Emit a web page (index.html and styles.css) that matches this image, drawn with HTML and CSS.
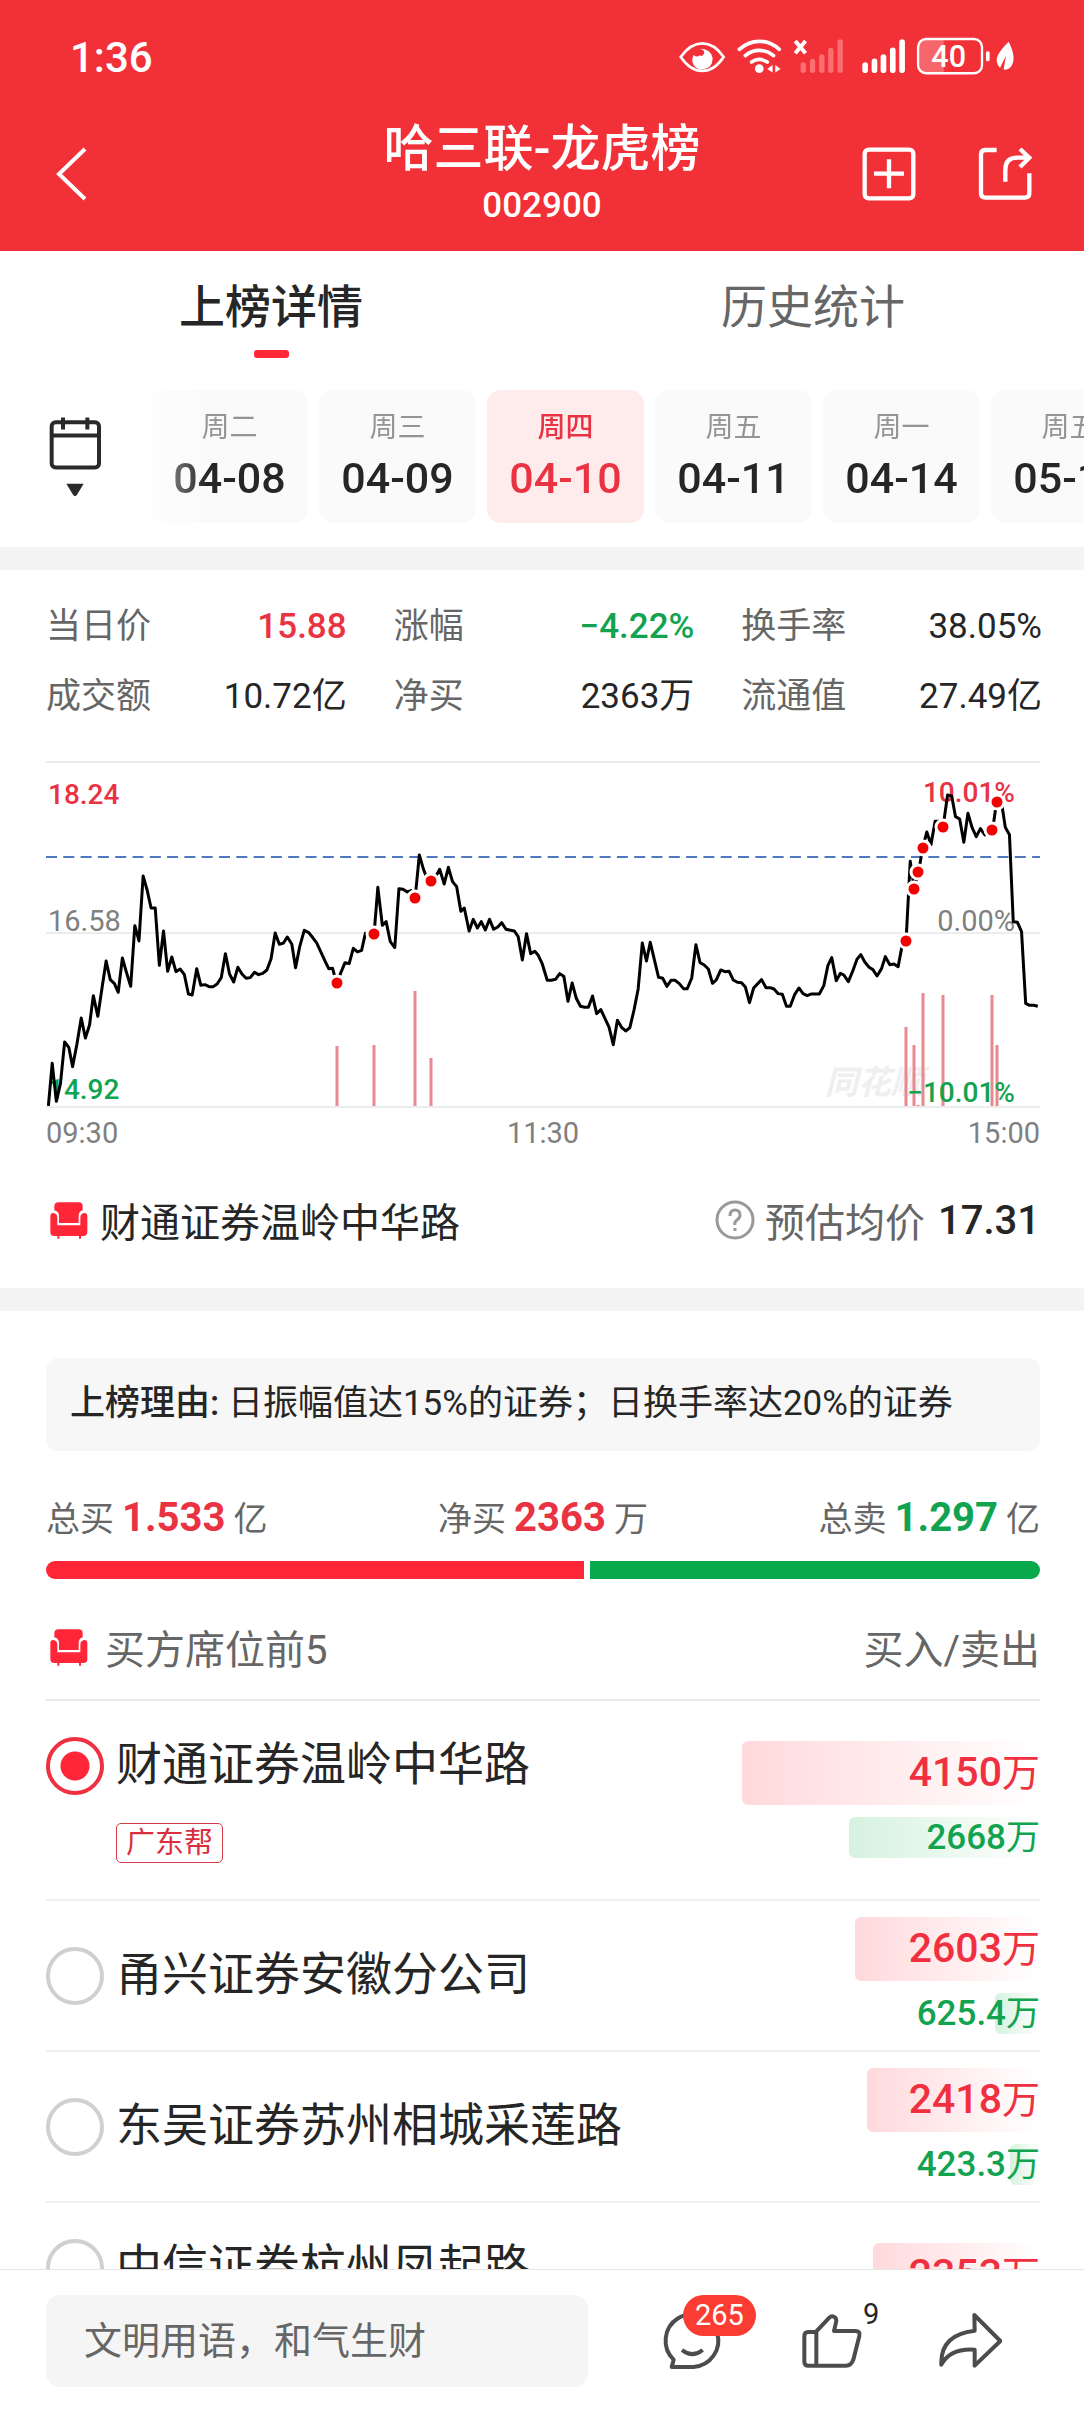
FILE: index.html
```html
<!DOCTYPE html>
<html lang="zh-CN">
<head>
<meta charset="utf-8">
<meta name="viewport" content="width=device-width, initial-scale=1">
<title>哈三联-龙虎榜</title>
<link rel="stylesheet" href="styles.css">
</head>
<body>
<svg class="sprite" aria-hidden="true">
  <symbol id="sofa" viewBox="62 66 114 114">
    <path d="M88 70h60q12 0 12 12v12q-12 4-12 16v22H89v-22q0-12-14-16V82q0-12 13-12z"/>
    <path d="M69 102q15 0 15 14v23h69v-23q0-14 15-14 6 1 6 9v48q0 12-12 12h-7v8h-6v-8H90v8h-6v-8h-9q-12 0-12-12v-48q0-8 6-9z"/>
  </symbol>
</svg>
<div class="app">
  <header class="top">
    <div class="status">
      <span class="clock">1:36</span>
      <svg class="status-icons" viewBox="50 40 1030 130" role="img" aria-label="状态栏">
        <g fill="none" stroke="#fff" stroke-linecap="round">
          <path stroke-width="8" d="M61 109Q90 68 126 68T190 109Q162 151 126 151T61 109z"/>
          <path stroke-width="11" d="M237 86Q264 62 297 62T357 86M255 105Q273 89 297 89T340 105M274 124Q296 109 321 124"/>
        </g>
        <g fill="#fff">
          <path d="M118 84q19 5 12 17-5 8-12 3-7 8-18-1-8 16-1 28 9 16 27 16 31-3 31-34-4-29-39-29z"/>
          <circle cx="297" cy="144" r="13"/>
          <path d="M337 133v23l-16-11zM345 133v23l16-11z"/>
          <path d="M1046 63q24 46 9 72-8 13-24 12l7-42-18 37q-13-15-9-32 8-21 35-47z"/>
          <rect x="978" y="92" width="11" height="30" rx="5"/>
        </g>
        <path d="M405 61l31 37M436 61l-31 37" stroke="#fff" stroke-width="12"/>
        <g stroke="#fb6f73" stroke-width="16" stroke-linecap="round">
          <path d="M429 133v16M457 122v27M485 109v40M512 89v60M540 64v85"/>
        </g>
        <g stroke="#fff" stroke-width="17" stroke-linecap="round">
          <path d="M615 133v16M643 122v27M670 109v40M698 89v60M726 64v85"/>
        </g>
        <path d="M795 56h56v101h-56q-20 0-20-20V76q0-20 20-20z" fill="#f7666b"/>
        <rect x="774" y="55" width="192" height="103" rx="24" fill="none" stroke="#fff" stroke-width="7"/>
        <text class="battery" x="866" y="140" text-anchor="middle">40</text>
      </svg>
    </div>
    <nav class="nav">
      <button class="icon-btn" aria-label="返回">
        <svg width="54" height="54" viewBox="0 0 54 54"><path d="M33 2L7 27 33 52" fill="none" stroke="#fff" stroke-width="4"/></svg>
      </button>
      <div class="heading">
        <h1>哈三联-龙虎榜</h1>
        <p>002900</p>
      </div>
      <div class="nav-actions">
        <button class="icon-btn" aria-label="添加自选">
          <svg width="54" height="54" viewBox="606 380 162 162" fill="none" stroke="#fff" stroke-width="13"><rect x="614" y="388" width="146" height="146" rx="12"/><path d="M687 417v87M642 460h90"/></svg>
        </button>
        <button class="icon-btn" aria-label="分享页面">
          <svg width="54" height="54" viewBox="953 380 162 162" fill="none" stroke="#fff" stroke-width="13"><path d="M1009 389h-34q-13 0-13 13v117q0 13 13 13h119q13 0 13-13v-60M1035 484v-36q0-36 36-36h35M1079 386l28 26-28 28"/></svg>
        </button>
      </div>
    </nav>
  </header>

  <main class="content">
    <div class="tabs" role="tablist">
      <button class="tab is-active" role="tab" aria-selected="true">上榜详情</button>
      <button class="tab" role="tab" aria-selected="false">历史统计</button>
    </div>
    <div class="dates">
      <button class="icon-btn calendar" aria-label="选择日期">
        <svg width="55" height="82" viewBox="85 75 165 245"><g fill="none" stroke="#2a2a2a" stroke-width="12"><rect x="96" y="93" width="142" height="136" rx="12"/><path d="M96 133h142M130 79v36M203 79v36"/></g><path d="M140 278h52l-20 33q-6 8-12 0z" fill="#2a2a2a"/></svg>
      </button>
      <div class="date-strip">
        <span class="date-edge" aria-hidden="true"></span>
        <button class="date"><small>周二</small>04-08</button>
        <button class="date"><small>周三</small>04-09</button>
        <button class="date is-active"><small>周四</small>04-10</button>
        <button class="date"><small>周五</small>04-11</button>
        <button class="date"><small>周一</small>04-14</button>
        <button class="date"><small>周五</small>05-16</button>
      </div>
    </div>

    <section class="quote">
      <dl class="stats">
        <div><dt>当日价</dt><dd class="up">15.88</dd></div>
        <div><dt>涨幅</dt><dd class="down">−4.22%</dd></div>
        <div><dt>换手率</dt><dd>38.05%</dd></div>
        <div><dt>成交额</dt><dd>10.72亿</dd></div>
        <div><dt>净买</dt><dd>2363万</dd></div>
        <div><dt>流通值</dt><dd>27.49亿</dd></div>
      </dl>
      <svg class="chart" viewBox="1 0 994 348" role="img" aria-label="分时走势">
        <text class="watermark" x="780" y="333">同花顺</text>
        <path d="M0 1h995M0 172h995M0 346h995" stroke="#ececec" stroke-width="2"/>
        <path d="M1 96h994" stroke="#5079bd" stroke-width="2" stroke-dasharray="11 6.3"/>
        <text class="up" x="3" y="43">18.24</text>
        <text class="flat" x="3" y="170">16.58</text>
        <text class="down" x="3" y="338">14.92</text>
        <g stroke="#e8898f" stroke-width="3">
          <path d="M292 285v60M329 284v61M370 230v115M386 297v48M861 266v79M869 284v61M873 344v1M878 232v113M898 234v111M947 234v111M952 284v61"/>
        </g>
        <g text-anchor="end">
          <text class="up" x="970" y="41">10.01%</text>
          <text class="flat" x="970" y="170">0.00%</text>
          <text class="down" x="970" y="341">−10.01%</text>
        </g>
        <g transform="translate(-45 -11) scale(.3457 .3333)">
          <polyline class="price" points="140,1068 151,940 163,1054 175,1000 187,876 199,892 210,950 222,885 235,804 247,864 259,825 270,737 283,799 295,715 307,633 319,689 331,701 342,727 354,624 366,668 378,709 390,527 402,573 414,378 426,422 437,474 449,474 461,646 473,543 485,664 497,621 509,665 521,657 533,673 545,732 556,735 569,656 581,706 593,704 605,710 617,710 628,702 640,683 652,611 664,672 676,696 688,652 700,672 712,685 724,683 736,667 748,674 760,670 772,660 784,627 796,549 808,583 820,579 831,561 844,582 855,653 867,590 880,541 892,547 904,562 916,579 928,606 940,633 951,656 962,655 974,700 986,668 998,638 1010,641 1022,595 1034,606 1046,601 1057,550 1070,549 1082,553 1093,412 1106,526 1117,515 1129,575 1142,593 1154,416 1166,418 1178,426 1189,422 1201,443 1213,315 1225,358 1236,388 1248,394 1260,380 1272,358 1285,402 1297,352 1309,395 1321,410 1333,484 1343,474 1357,543 1369,508 1381,534 1392,515 1404,540 1416,508 1428,538 1440,531 1451,518 1464,538 1488,543 1499,560 1511,630 1523,551 1535,611 1547,604 1557,616 1568,640 1583,691 1595,691 1607,688 1619,671 1631,679 1643,754 1655,699 1667,745 1679,769 1691,772 1702,772 1714,738 1726,791 1738,779 1762,832 1774,884 1786,811 1798,832 1810,843 1822,833 1834,780 1846,717 1858,579 1870,633 1881,577 1905,682 1917,685 1929,709 1941,691 1953,691 1965,701 1977,716 1988,716 2001,684 2013,584 2025,638 2037,645 2049,657 2061,700 2072,690 2085,660 2097,665 2109,664 2121,690 2133,697 2145,698 2156,711 2168,758 2180,714 2203,689 2216,713 2228,713 2239,717 2251,731 2263,733 2275,769 2286,769 2299,733 2311,714 2323,731 2335,737 2347,732 2370,732 2383,707 2395,646 2406,623 2419,692 2431,670 2441,675 2454,695 2466,665 2479,628 2490,614 2502,637 2514,652 2525,659 2537,678 2550,656 2561,620 2574,644 2586,642 2598,650 2609,590 2621,572 2633,334 2645,417 2657,366 2669,294 2681,246 2693,284 2705,214 2717,214 2728,231 2741,135 2753,138 2764,200 2776,207 2788,277 2800,190 2812,233 2824,260 2836,236 2849,255 2871,241 2883,155 2896,150 2908,232 2920,254 2931,515 2943,517 2955,545 2967,760 2978,766 2990,766 3002,769"/>
        </g>
        <g fill="#f30000" stroke="#fff" stroke-width="3">
          <circle cx="292" cy="222" r="7"/><circle cx="329" cy="173" r="7"/><circle cx="370" cy="137" r="7"/><circle cx="386" cy="120" r="7"/>
          <circle cx="861" cy="180" r="7"/><circle cx="869" cy="128" r="7"/><circle cx="873" cy="111" r="7"/><circle cx="878" cy="87" r="7"/>
          <circle cx="898" cy="66" r="7"/><circle cx="947" cy="69" r="7"/><circle cx="952" cy="41" r="7"/>
        </g>
      </svg>
      <div class="times"><span>09:30</span><span>11:30</span><span>15:00</span></div>
      <div class="seat-line">
        <svg class="sofa"><use href="#sofa"/></svg>
        <span class="seat-line-name">财通证券温岭中华路</span>
        <svg class="help" viewBox="0 0 40 40" role="img" aria-label="说明"><circle cx="20" cy="20" r="18" fill="none" stroke="#999" stroke-width="3"/><path d="M15 16q0-6 5-6t5 5q0 3-3 5t-2 5M20 28v3" fill="none" stroke="#999" stroke-width="3"/></svg>
        <span class="muted">预估均价</span>
        <strong>17.31</strong>
      </div>
    </section>

    <section class="detail">
      <p class="reason"><b>上榜理由:</b> 日振幅值达15%的证券；日换手率达20%的证券</p>
      <div class="totals">
        <span>总买<b class="up">1.533</b>亿</span>
        <span>净买<b class="up">2363</b>万</span>
        <span>总卖<b class="down">1.297</b>亿</span>
      </div>
      <div class="ratio"><i class="ratio-buy" style="flex-grow:1533"></i><i class="ratio-sell" style="flex-grow:1283"></i></div>
      <div class="list-head">
        <svg class="sofa"><use href="#sofa"/></svg>
        <h2>买方席位前5</h2>
        <span>买入/卖出</span>
      </div>
      <ul class="seats">
        <li class="seat is-tall">
          <div class="seat-main">
            <label><input type="radio" name="seat" checked>财通证券温岭中华路</label>
            <span class="tag">广东帮</span>
          </div>
          <div class="amounts">
            <span class="buy"><i style="width:100%"></i>4150<small>万</small></span>
            <span class="sell"><i style="width:64%"></i>2668<small>万</small></span>
          </div>
        </li>
        <li class="seat">
          <div class="seat-main"><label><input type="radio" name="seat">甬兴证券安徽分公司</label></div>
          <div class="amounts">
            <span class="buy"><i style="width:62%"></i>2603<small>万</small></span>
            <span class="sell"><i style="width:15%"></i>625.4<small>万</small></span>
          </div>
        </li>
        <li class="seat">
          <div class="seat-main"><label><input type="radio" name="seat">东吴证券苏州相城采莲路</label></div>
          <div class="amounts">
            <span class="buy"><i style="width:58%"></i>2418<small>万</small></span>
            <span class="sell"><i style="width:10%"></i>423.3<small>万</small></span>
          </div>
        </li>
        <li class="seat is-tall">
          <div class="seat-main"><label><input type="radio" name="seat">中信证券杭州凤起路</label></div>
          <div class="amounts">
            <span class="buy"><i style="width:56%"></i>2353<small>万</small></span>
          </div>
        </li>
      </ul>
    </section>
  </main>

  <footer class="bottom">
    <input class="comment" type="text" aria-label="评论" placeholder="文明用语，和气生财">
    <div class="actions">
      <button class="icon-btn" aria-label="评论列表">
        <svg width="64" height="64" viewBox="60 85 192 192"><path d="M95 262L101 240A79 79 0 1 1 160 262zM126 211Q157 236 188 211"/></svg>
        <span class="badge">265</span>
      </button>
      <button class="icon-btn" aria-label="点赞">
        <svg width="64" height="64" viewBox="475 85 192 192"><path d="M527 155L566 114Q574 106 583 113 589 119 586 128L580 154H644Q660 154 656 169L638 240Q632 258 616 258H503Q491 258 491 246V169Q491 157 503 157H527V258"/></svg>
        <span class="count">9</span>
      </button>
      <button class="icon-btn" aria-label="分享">
        <svg width="64" height="64" viewBox="893 85 192 192"><path d="M1002 106L1080 184 1003 258V210Q930 205 903 255 899 165 1003 153z"/></svg>
      </button>
    </div>
  </footer>
</div>
</body>
</html>
```

FILE: styles.css
```css
* { box-sizing: border-box; }

body {
  margin: 0;
  color: #262626;
  background: #fff;
  font-family: Roboto, "Noto Sans CJK SC", sans-serif;
}

h1, h2, p, ul, dl, dd { margin: 0; padding: 0; }
ul { list-style: none; }

button {
  padding: 0;
  border: 0;
  background: none;
  color: inherit;
  font: inherit;
}

svg { display: block; }
.sprite { display: none; }
.icon-btn { position: relative; flex: none; }
.up { color: #e93343; fill: #e93343; }
.down { color: #12a350; fill: #12a350; }
.flat { fill: #808080; }
.muted { color: #666; }

.app {
  display: flex;
  flex-direction: column;
  height: 100vh;
}

/* Header */
.top {
  flex: none;
  padding-bottom: 16px;
  background: #f13038;
  color: #fff;
}

.status {
  display: flex;
  align-items: center;
  justify-content: space-between;
  height: 112px;
  padding: 0 64px 0 70px;
}

.clock {
  padding-top: 3px;
  font-size: 42px;
  font-weight: 500;
}

.status-icons { width: 343px; }

.battery {
  fill: #fff;
  font-size: 92px;
  font-weight: 500;
}

.nav {
  display: grid;
  grid-template-columns: 1fr auto 1fr;
  align-items: center;
  height: 123px;
  padding: 0 52px;
}

.nav-actions {
  display: flex;
  justify-content: flex-end;
  gap: 62px;
}

.heading { text-align: center; }

h1 {
  font-size: 50px;
  font-weight: 500;
  line-height: 64px;
}

.heading p {
  font-size: 35px;
  font-weight: 500;
  line-height: 50px;
}

/* Tabs and date picker */
.content {
  flex: 1;
  min-height: 0;
  overflow-y: auto;
  scrollbar-width: none;
}

.tabs {
  display: grid;
  grid-template-columns: 1fr 1fr;
  padding-top: 26px;
}

.tab {
  display: flex;
  flex-direction: column;
  align-items: center;
  gap: 13px;
  color: #666;
  font-size: 46px;
  line-height: 60px;
}

.tab::after {
  content: "";
  width: 35px;
  height: 8px;
  border-radius: 3px;
}

.tab.is-active {
  color: #262626;
  font-weight: 500;
}

.tab.is-active::after { background: #ff2637; }

.dates {
  display: flex;
  align-items: center;
  padding: 32px 0 24px 48px;
}

.date-strip {
  display: flex;
  flex: 1;
  gap: 11px;
  overflow: hidden;
  mask-image: linear-gradient(to right, transparent 10px, #000 104px);
}

.date-edge {
  flex: none;
  width: 37px;
  border-radius: 0 14px 14px 0;
  background: #fafafa;
}

.date {
  display: flex;
  flex: none;
  flex-direction: column;
  align-items: center;
  width: 157px;
  height: 133px;
  padding-top: 14px;
  border-radius: 14px;
  background: #fafafa;
  font-size: 43px;
  font-weight: 500;
  line-height: 52px;
}

.date small {
  color: #949494;
  font-size: 28px;
  font-weight: 400;
  line-height: 48px;
}

.date.is-active,
.date.is-active small {
  color: #e93343;
  font-weight: 500;
}

.date.is-active { background: #feeced; }

/* Quote and intraday chart */
.quote {
  padding: 22px 44px 38px 46px;
  border-top: 23px solid #f4f4f4;
}

.stats {
  display: grid;
  grid-template-columns: repeat(3, 1fr);
  column-gap: 47px;
  margin-right: -2px;
  font-size: 35px;
  line-height: 70px;
}

.stats div {
  display: flex;
  justify-content: space-between;
}

.stats dt { color: #666; }
.stats .up, .stats .down { font-weight: 500; }

.chart {
  width: 100%;
  margin-top: 29px;
  font-size: 29px;
}

.chart .up, .chart .down {
  font-size: 28px;
  font-weight: 500;
}

.watermark {
  fill: #efefef;
  font-size: 33px;
  font-style: italic;
  font-weight: 700;
}

.price {
  fill: none;
  stroke: #000;
  stroke-width: 3px;
  stroke-linejoin: round;
  vector-effect: non-scaling-stroke;
}

.times {
  display: flex;
  justify-content: space-between;
  color: #808080;
  font-size: 29px;
  line-height: 48px;
}

.seat-line {
  display: flex;
  align-items: center;
  height: 60px;
  margin-top: 33px;
  padding-left: 4px;
  font-size: 40px;
}

.sofa {
  flex: none;
  width: 38px;
  height: 38px;
  fill: #ff2637;
}

.seat-line-name {
  flex: 1;
  margin-left: 12px;
}

.help {
  width: 40px;
  height: 40px;
  margin-right: 10px;
}

.seat-line strong {
  margin-left: 13px;
  font-weight: 500;
}

/* Ranking detail */
.detail {
  padding: 47px 44px 0 46px;
  border-top: 23px solid #f4f4f4;
}

.reason {
  padding: 16px 24px 17px;
  border-radius: 12px;
  background: #f7f7f7;
  font-size: 35px;
  line-height: 60px;
}

.reason b { font-weight: 500; }

.totals {
  display: flex;
  justify-content: space-between;
  margin-top: 37px;
  color: #666;
  font-size: 34px;
  line-height: 60px;
}

.totals b {
  margin: 0 8px;
  font-size: 40px;
  font-weight: 700;
}

.ratio {
  display: flex;
  gap: 6px;
  height: 18px;
  margin-top: 12px;
}

.ratio i { flex-basis: 0; }

.ratio-buy {
  border-radius: 9px 0 0 9px;
  background: #ff2637;
}

.ratio-sell {
  border-radius: 0 9px 9px 0;
  background: #08a84c;
}

.list-head {
  display: flex;
  align-items: center;
  height: 122px;
  padding: 16px 0 0 4px;
  border-bottom: 2px solid #e8e8e8;
  color: #666;
  font-size: 40px;
}

.list-head h2 {
  flex: 1;
  margin-left: 17px;
  font-size: 40px;
  font-weight: 400;
}

.seat {
  display: flex;
  align-items: center;
  justify-content: space-between;
  padding: 16px 0;
  border-bottom: 2px solid #efefef;
}

.seat.is-tall {
  align-items: flex-start;
  padding: 32px 0;
}

.seat.is-tall .amounts { padding: 8px 0 6px; }

.seat-main {
  display: flex;
  flex-direction: column;
  align-items: flex-start;
  gap: 28px;
  padding-bottom: 4px;
}

.seat label {
  display: flex;
  align-items: center;
  gap: 12px;
  font-size: 46px;
  line-height: 60px;
}

.seat input {
  flex: none;
  width: 58px;
  height: 58px;
  margin: 4px 0 0;
  border: 4px solid #d0d0d0;
  border-radius: 50%;
  appearance: none;
}

.seat input:checked {
  border-color: #ef3040;
  background: radial-gradient(circle, #ff2637 14px, transparent 15px);
}

.tag {
  margin-left: 70px;
  padding: 0 9px;
  border: 1px solid #d33c49;
  border-radius: 5px;
  color: #d92f40;
  font-size: 29px;
  line-height: 38px;
}

.amounts {
  display: flex;
  flex: none;
  flex-direction: column;
  gap: 12px;
  width: 298px;
  text-align: right;
  font-weight: 500;
}

.amounts span {
  position: relative;
  z-index: 0;
}

.amounts small { font-weight: 400; }

.amounts i {
  position: absolute;
  z-index: -1;
  top: 0;
  right: 0;
  bottom: 0;
  border-radius: 6px;
}

.buy {
  color: #f03040;
  font-size: 41px;
  line-height: 63px;
}

.buy small { font-size: 38px; }
.buy i { background: linear-gradient(to right, #ffd9dc, #fff); }

.sell {
  color: #12a350;
  font-size: 35px;
  line-height: 40px;
}

.sell small { font-size: 34px; }
.sell i { background: linear-gradient(to right, #d6f2df, #fff); }

/* Comment bar */
.bottom {
  display: flex;
  flex: none;
  gap: 72px;
  padding: 25px 82px 25px 46px;
  border-top: 1px solid #e6e6e6;
  background: #fff;
}

.comment {
  flex: 1;
  min-width: 0;
  height: 92px;
  padding: 0 38px;
  border: 0;
  border-radius: 14px;
  background: #f5f5f5;
  font: inherit;
  font-size: 38px;
}

.comment::placeholder {
  color: #666;
  opacity: 1;
}

.actions {
  display: flex;
  align-items: flex-start;
  gap: 75px;
  padding-top: 13px;
}

.actions svg {
  fill: none;
  stroke: #4c4c4c;
  stroke-width: 12px;
  stroke-linejoin: round;
}

.badge {
  position: absolute;
  top: -13px;
  left: 23px;
  padding: 0 12px;
  border-radius: 21px;
  background: #fb3c32;
  color: #fff;
  font-size: 29px;
  line-height: 41px;
}

.count {
  position: absolute;
  top: -12px;
  left: 64px;
  font-size: 29px;
  line-height: 36px;
}
```
